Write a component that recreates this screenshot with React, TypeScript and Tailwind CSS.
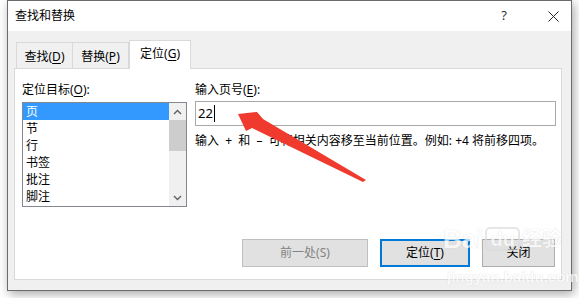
import React from 'react';

const U: React.FC<{ c: string }> = ({ c }) => <span className="underline underline-offset-2">{c}</span>;

const items = ['页', '节', '行', '书签', '批注', '脚注'];

const App: React.FC = () => {
  return (
    <div className="relative w-[579px] h-[298px] overflow-hidden bg-white pl-[7px] font-['Noto_Sans','Noto_Sans_CJK_SC',sans-serif] text-[12px] text-black">
      {/* Dialog */}
      <div className="w-[565px] h-[291px] border border-[#6b6b6b] bg-[#f0f0f0] flex flex-col shadow-[2px_3px_10px_rgba(0,0,0,0.35)]">
        {/* Title bar */}
        <div className="h-[30px] bg-white flex items-center pl-[7px] shrink-0">
          <span className="text-[12px]">查找和替换</span>
          <span className="ml-auto mr-[41px] text-[13px] text-[#333]">?</span>
          <svg className="mr-[12px]" width="11" height="11" viewBox="0 0 11 11">
            <path d="M0.5 0.5 L10.5 10.5 M10.5 0.5 L0.5 10.5" stroke="#222" strokeWidth="1" fill="none" />
          </svg>
        </div>

        {/* Content */}
        <div className="pl-[6px] pt-[9px]">
          {/* Tabs */}
          <div className="flex items-end h-[28px] ml-[2px]">
            <div className="w-[57px] h-[26px] border border-b-0 border-[#d9d9d9] bg-[#f0f0f0] flex items-center justify-center leading-none pt-[2px]">
              查找(<U c="D" />)
            </div>
            <div className="w-[56px] h-[26px] border border-l-0 border-b-0 border-[#d9d9d9] bg-[#f0f0f0] flex items-center justify-center leading-none pt-[2px]">
              替换(<U c="P" />)
            </div>
            <div className="relative z-10 -mb-px w-[62px] h-[29px] border border-b-0 border-[#d9d9d9] bg-white flex items-center justify-center leading-none pb-[3px]">
              定位(<U c="G" />)
            </div>
          </div>

          {/* Panel */}
          <div className="w-[548px] h-[212px] border border-[#d9d9d9] bg-white flex flex-col">
            <div className="flex pt-[12px] pl-[7px]">
              {/* Left column */}
              <div className="w-[165px]">
                <div className="h-[17px] leading-[17px]">定位目标(<U c="O" />):</div>
                <div className="mt-[4px] h-[105px] border border-[#828790] flex">
                  <div className="flex-1 flex flex-col">
                    {items.map((t, i) => (
                      <div
                        key={t}
                        className={`h-[17px] leading-[18px] pl-[3px] ${i === 0 ? 'bg-[#3399ff] text-white' : ''}`}
                      >
                        {t}
                      </div>
                    ))}
                  </div>
                  <div className="w-[17px] bg-[#f0f0f0] flex flex-col items-center">
                    <div className="h-[17px] flex items-center justify-center">
                      <svg width="9" height="6" viewBox="0 0 9 6">
                        <path d="M1 5 L4.5 1.5 L8 5" stroke="#606060" strokeWidth="1.4" fill="none" />
                      </svg>
                    </div>
                    <div className="w-[17px] h-[31px] bg-[#cdcdcd]" />
                    <div className="mt-auto h-[17px] flex items-center justify-center">
                      <svg width="9" height="6" viewBox="0 0 9 6">
                        <path d="M1 1 L4.5 4.5 L8 1" stroke="#606060" strokeWidth="1.4" fill="none" />
                      </svg>
                    </div>
                  </div>
                </div>
              </div>

              {/* Right column */}
              <div className="ml-[8px] w-[361px]">
                <div className="h-[17px] leading-[17px]">输入页号(<U c="E" />):</div>
                <div className="mt-[3px] h-[25px] border border-[#a9a9a9] flex items-center pl-[2px]">
                  <span className="text-[13px] leading-none">22</span>
                  <span className="w-px h-[17px] bg-black ml-[1px]" />
                </div>
                <div className="mt-[6px] h-[17px] leading-[17px] whitespace-pre">
                  {'输入  +  和  –  可将相关内容移至当前位置。例如: +4 将前移四项。'}
                </div>
              </div>
            </div>

            {/* Buttons */}
            <div className="mt-auto mb-[12px] flex justify-end gap-[12px] pr-[6px]">
              <div className="w-[126px] h-[28px] border border-[#bfbfbf] bg-[#e1e1e1] text-[#838383] flex items-center justify-center">
                前一处(S)
              </div>
              <div className="w-[90px] h-[28px] border-2 border-[#0078d7] bg-[#e1e1e1] flex items-center justify-center">
                定位(<U c="T" />)
              </div>
              <div className="w-[73px] h-[28px] border border-[#adadad] bg-[#e1e1e1] flex items-center justify-center">
                关闭
              </div>
            </div>
          </div>
        </div>
      </div>

      {/* Baidu watermark */}
      <div className="absolute left-[443px] top-[226px] flex items-center gap-[2px] text-white opacity-70 [text-shadow:0_0_1px_#c0c0c0]">
        <span className="text-[26px] font-bold leading-none font-['Liberation_Sans',sans-serif]">Bai</span>
        <span className="px-[3px] rounded-[5px] border-2 border-[#dcdcdc] text-[20px] font-bold leading-none font-['Liberation_Sans',sans-serif]">du</span>
        <span className="text-[20px] font-bold leading-none">经验</span>
      </div>
      <div className="absolute left-[447px] top-[266px] text-[15px] font-bold text-white opacity-70 [text-shadow:0_0_1px_#c0c0c0] font-['Liberation_Sans',sans-serif]">
        jingyan.baidu.com
      </div>

      {/* Red arrow annotation */}
      <svg className="absolute left-0 top-0 pointer-events-none" width="579" height="298" viewBox="0 0 579 298">
        <polygon
          points="238,114 257,112 263,119 366,180 363,182 252,128 246,131"
          fill="#f03a2e"
        />
      </svg>
    </div>
  );
};

export default App;
